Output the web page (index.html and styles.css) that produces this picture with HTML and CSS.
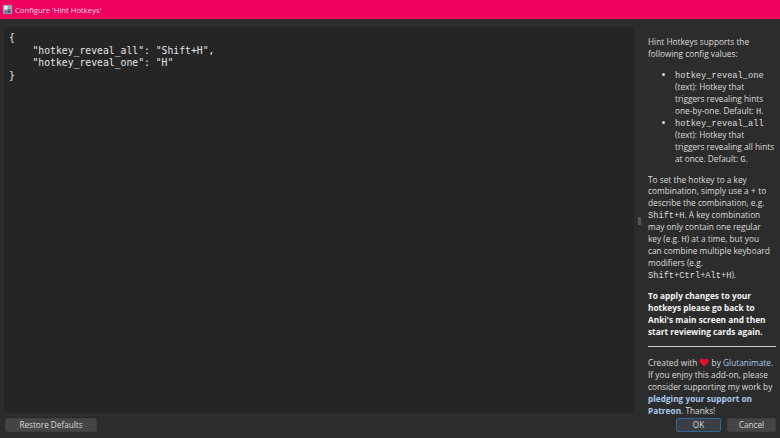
FILE: index.html
```html
<!DOCTYPE html>
<html lang="en">
<head>
<meta charset="utf-8">
<title>Configure 'Hint Hotkeys'</title>
<link rel="stylesheet" href="styles.css">
</head>
<body>
<div class="window">
  <header class="titlebar">
    <svg class="app-icon" viewBox="0 0 12 12" width="11" height="11" aria-hidden="true">
      <rect x="1" y="1" width="10" height="10" rx="1.5" fill="#9aa4b4"/>
      <rect x="2.5" y="2" width="3.5" height="4" fill="#e6eaf0"/>
      <rect x="6" y="6" width="3.5" height="4" fill="#4a5a78"/>
      <rect x="2.5" y="7" width="3" height="3" fill="#6b7890"/>
    </svg>
    <span class="title">Configure 'Hint Hotkeys'</span>
  </header>
  <main class="content">
    <pre class="editor">{
    "hotkey_reveal_all": "Shift+H",
    "hotkey_reveal_one": "H"
}</pre>
    <div class="splitter"><span class="grip"></span></div>
    <aside class="help">
      <p>Hint Hotkeys supports the following config values:</p>
      <ul>
        <li><code>hotkey_reveal_one</code> (text): Hotkey that<br>triggers revealing hints<br>one-by-one. Default: <code>H</code>.</li>
        <li><code>hotkey_reveal_all</code> (text): Hotkey that<br>triggers revealing all hints<br>at once. Default: <code>G</code>.</li>
      </ul>
      <p>To set the hotkey to a key combination, simply use a <code>+</code> to describe the combination, e.g. <code>Shift+H</code>. A key combination may only contain one regular key (e.g. <code>H</code>) at a time, but you<br>can combine multiple keyboard modifiers (e.g. <code>Shift+Ctrl+Alt+H</code>).</p>
      <p class="strong">To apply changes to your hotkeys please go back to Anki's main screen and then start reviewing cards again.</p>
      <hr>
      <p>Created with <svg class="heart" viewBox="0 0 12 11" width="10" height="9" aria-hidden="true"><path d="M6 10.500 1.200 5.600C-.4 3.800.7.8 3.200.8c1.200 0 2.200.6 2.800 1.700C6.600 1.400 7.600.8 8.800.8c2.500 0 3.600 3 2 4.800z" fill="#e8112d"/></svg> by <a class="link">Glutanimate</a>. If you enjoy this add-on, please consider supporting my work by <a class="link strong">pledging your support on Patreon</a>. Thanks!</p>
    </aside>
  </main>
  <footer class="buttons">
    <button class="btn restore">Restore Defaults</button>
    <div class="spacer"></div>
    <button class="btn ok">OK</button>
    <button class="btn cancel">Cancel</button>
  </footer>
</div>
</body>
</html>
```
FILE: styles.css
```css
* { box-sizing: border-box; }
html, body { margin: 0; padding: 0; height: 100%; }
body { background: #2c2c2c; font-family: "Open Sans", "Liberation Sans", sans-serif; overflow: hidden; }
.window { width: 780px; height: 438px; display: flex; flex-direction: column; }
.titlebar { height: 19px; flex: none; background: #ee0060; display: flex; align-items: center; padding-left: 2px; gap: 2px; }
.app-icon { flex: none; }
.title { color: #f8d8e4; font-family: "Open Sans", sans-serif; font-size: 7.7px; }
.content { flex: 1; display: flex; min-height: 0; padding: 8px 0 0 4px; height: 394px; }
.editor { margin: 0; width: 630px; height: 386px; flex: none; background: #252525; color: #e4e4e4; font-family: "DejaVu Sans Mono", monospace; font-size: 9.75px; line-height: 12.67px; padding: 5px 5px; }
.splitter { width: 0; position: relative; }
.grip { position: absolute; left: 4px; top: 190px; width: 3px; height: 8px; background: #555; }
.help { flex: 1; padding: 0 4.500px 0 14px; color: #dcdcdc; font-size: 8.3px; line-height: 11.95px; min-width: 0; }
.help p { margin: 0 0 9px; }
.help p:first-child { margin-top: 9px; }
.help ul { margin: 0 -4px 9px 0; padding-left: 27px; }
.help code { font-family: "Liberation Mono", monospace; font-size: 8.7px; line-height: 1; font-weight: 400; }
.help hr { border: 0; height: 1px; background: #d0d0d0; margin: 0 0 10px 0; }
.strong { font-weight: 700; color: #f4f4f4; }
.help .strong { margin-bottom: 8px; }
.link { color: #a9c8f0; }
.link.strong { color: #a9c8f0; }
.heart { vertical-align: -1px; margin: 0; }
.buttons { height: 25px; flex: none; display: flex; align-items: flex-start; padding: 5px 4px 0 5px; gap: 6px; }
.spacer { flex: 1; }
.btn { height: 14px; border: 1px solid #3e3e3e; border-radius: 2px; background: #454545; color: #d8d8d8; font-family: "Open Sans", sans-serif; font-size: 8.2px; line-height: 12px; padding: 0; }
.restore { width: 92px; }
.ok { width: 45px; border-color: #34669c; background: #3a3f46; }
.cancel { width: 49px; }
```
